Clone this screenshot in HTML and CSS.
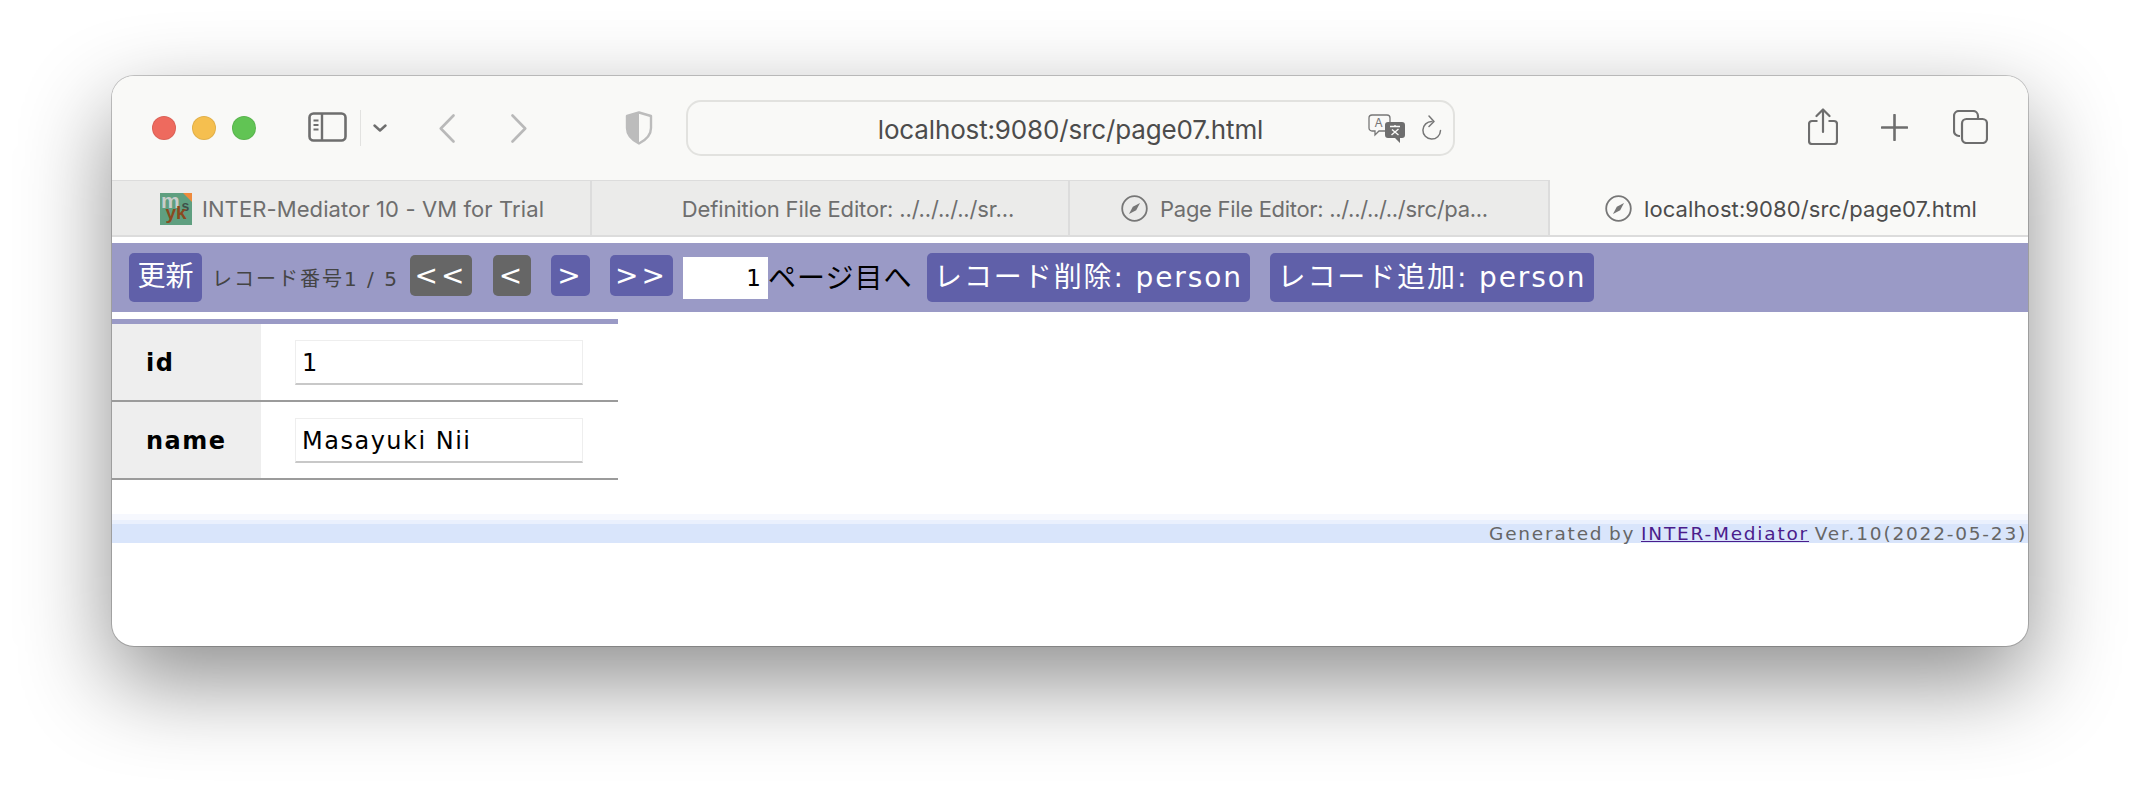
FILE: index.html
```html
<!DOCTYPE html>
<html lang="ja">
<head>
<meta charset="utf-8">
<title>INTER-Mediator</title>
<link rel="stylesheet" href="styles.css">
</head>
<body>
<div class="window">
  <header class="chrome">
    <span class="light red"></span><span class="light yellow"></span><span class="light green"></span>
    <svg class="ic sidebar" width="39" height="30" viewBox="0 0 39 30"><rect x="1.5" y="1.5" width="36" height="27" rx="4" fill="none" stroke="#6e6e6e" stroke-width="2.6"/><path d="M14 1.5v27" stroke="#6e6e6e" stroke-width="2.4"/><path d="M5.5 8.5h5M5.5 13h5M5.5 17.5h5" stroke="#6e6e6e" stroke-width="2"/></svg>
    <span class="divider"></span>
    <svg class="ic drop" width="14" height="8" viewBox="0 0 14 8"><path d="M1.5 1.5 7 6.5l5.500-5" fill="none" stroke="#6e6e6e" stroke-width="2.400" stroke-linecap="round" stroke-linejoin="round"/></svg>
    <svg class="ic back" width="16" height="29" viewBox="0 0 16 29"><path d="M14.500 1.500 1.800 14.500l12.700 13" fill="none" stroke="#b9b9b9" stroke-width="2.600" stroke-linecap="round" stroke-linejoin="round"/></svg>
    <svg class="ic fwd" width="16" height="29" viewBox="0 0 16 29"><path d="M1.500 1.500 14.200 14.500 1.500 27.500" fill="none" stroke="#b9b9b9" stroke-width="2.600" stroke-linecap="round" stroke-linejoin="round"/></svg>
    <svg class="ic shield" width="28" height="34" viewBox="0 0 28 34"><path d="M14 1.500 26 5v12c0 7-5 12-12 15.500C7 29 2 24 2 17V5z" fill="none" stroke="#bcbcbc" stroke-width="2.400" stroke-linejoin="round"/><path d="M14 1.500V32.500C7 29 2 24 2 17V5z" fill="#bcbcbc"/></svg>
    <div class="urlbar">
      <span></span>
      <span class="urltext">localhost:9080/src/page07.html</span>
      <span class="urlicons">
        <svg width="38" height="29" viewBox="0 0 38 29"><path d="M4 1h15a3 3 0 0 1 3 3v10a3 3 0 0 1-3 3h-8l-4 4v-4H4a3 3 0 0 1-3-3V4a3 3 0 0 1 3-3z" fill="#f9f9f7" stroke="#777" stroke-width="1.300"/><text class="glyph" x="6.500" y="13" font-size="12">A</text><path d="M20 8h14a3 3 0 0 1 3 3v10a3 3 0 0 1-3 3h-2v5l-5-5h-7a3 3 0 0 1-3-3V11a3 3 0 0 1 3-3z" fill="#6e6e6e"/><path d="M22 12.500h10M27 11v2M23.500 21l7-6M24 15.500l6.500 5.500" stroke="#f9f9f7" stroke-width="1.400" fill="none"/></svg>
        <svg class="reload" width="22" height="26" viewBox="0 0 22 26"><path d="M12 6.500a8.800 8.800 0 1 0 8.500 9" fill="none" stroke="#777" stroke-width="1.500" stroke-linecap="round"/><path d="M9 1l5 5.500-5 5" fill="none" stroke="#777" stroke-width="1.500" stroke-linecap="round" stroke-linejoin="round"/></svg>
      </span>
    </div>
    <svg class="ic share" width="30" height="37" viewBox="0 0 30 37"><path d="M9.500 13H4a3 3 0 0 0-3 3v17a3 3 0 0 0 3 3h22a3 3 0 0 0 3-3V16a3 3 0 0 0-3-3h-5.500" fill="none" stroke="#6e6e6e" stroke-width="2.200"/><path d="M15 24V2M8.500 8 15 1.500 21.500 8" fill="none" stroke="#6e6e6e" stroke-width="2.200" stroke-linecap="round" stroke-linejoin="round"/></svg>
    <svg class="ic plus" width="27" height="27" viewBox="0 0 27 27"><path d="M13.500 1v25M1 13.500h25" stroke="#6e6e6e" stroke-width="2.600" stroke-linecap="round"/></svg>
    <svg class="ic copies" width="35" height="34" viewBox="0 0 35 34"><path d="M7 26H6a5 5 0 0 1-5-5V6a5 5 0 0 1 5-5h14a5 5 0 0 1 5 5v2" fill="none" stroke="#6e6e6e" stroke-width="2.200"/><rect x="9" y="9" width="25" height="24" rx="4.500" fill="none" stroke="#6e6e6e" stroke-width="2.200"/></svg>
  </header>
  <nav class="tabs">
    <div class="tab t1">
      <svg class="favicon" width="32" height="32" viewBox="0 0 32 32"><rect width="32" height="32" fill="#5f9f80"/><path d="M23 0h9v9z" fill="#ee8a3c"/><text class="fav m" x="1" y="15" font-size="21">m</text><text class="fav s" x="21.500" y="18" font-size="14">s</text><text class="fav yk" x="5.500" y="26" font-size="19">yk</text></svg>
      <span>INTER-Mediator 10 - VM for Trial</span>
    </div>
    <div class="tab t2"><span>Definition File Editor: ../../../../sr...</span></div>
    <div class="tab t3">
      <svg class="compass" width="27" height="27" viewBox="0 0 27 27"><circle cx="13.500" cy="13.500" r="12.300" fill="none" stroke="#777" stroke-width="1.800"/><path d="M19 8l-7.200 3.800L8 19l7.200-3.800z" fill="#777"/></svg>
      <span>Page File Editor: ../../../../src/pa...</span>
    </div>
    <div class="tab t4 active">
      <svg class="compass" width="27" height="27" viewBox="0 0 27 27"><circle cx="13.500" cy="13.500" r="12.300" fill="none" stroke="#777" stroke-width="1.800"/><path d="M19 8l-7.200 3.800L8 19l7.200-3.800z" fill="#777"/></svg>
      <span>localhost:9080/src/page07.html</span>
    </div>
  </nav>
  <main class="page">
    <div class="navbar">
      <button class="btn reload-btn">更新</button>
      <span class="info">レコード番号1 / 5</span>
      <button class="btn small grey w62">&lt;&lt;</button>
      <button class="btn small grey w38">&lt;</button>
      <button class="btn small w39">&gt;</button>
      <button class="btn small w63">&gt;&gt;</button>
      <input class="pageno" value="1">
      <span class="pagelabel">ページ目へ</span>
      <button class="btn large del">レコード削除: person</button>
      <button class="btn large add">レコード追加: person</button>
    </div>
    <table class="record">
      <tr><th>id</th><td><input class="field" value="1"></td></tr>
      <tr><th>name</th><td><input class="field" value="Masayuki Nii"></td></tr>
    </table>
    <footer class="credit">Generated by <a href="#">INTER-Mediator</a> Ver.10(2022-05-23)</footer>
  </main>
</div>
</body>
</html>
```
FILE: styles.css
```css
* { box-sizing: border-box; }
html, body { margin: 0; height: 794px; overflow: hidden; background: #fff; }
body { padding: 76px 112px 0; }
.window {
  width: 1916px;
  height: 570px;
  border-radius: 22px;
  overflow: hidden;
  background: #fff;
  box-shadow: 0 0 0 1px rgba(0,0,0,.2), 0 35px 90px rgba(0,0,0,.45);
  font-family: "Inter", "Noto Sans", sans-serif;
}
.chrome {
  height: 104px;
  background: #f9f9f7;
  display: flex;
  align-items: center;
  padding-left: 40px;
}
.light { width: 24px; height: 24px; border-radius: 50%; margin-right: 16px; border: 1px solid rgba(0,0,0,.08); flex: none; }
.red { background: #ee6a5e; }
.yellow { background: #f5bf4f; }
.green { background: #61c454; }
.ic { flex: none; display: block; }
.sidebar { margin-left: 36px; margin-bottom: 2px; }
.divider { width: 1px; height: 36px; background: #e2e2e0; margin-left: 13px; }
.drop { margin-left: 12px; }
.back { margin-left: 52px; }
.fwd { margin-left: 56px; }
.shield { margin-left: 98px; }
.urlbar {
  margin-left: 33px;
  width: 769px;
  height: 56px;
  border: 2px solid #e2e2df;
  border-radius: 15px;
  display: grid;
  grid-template-columns: 1fr auto 1fr;
  align-items: center;
}
.urltext { font-size: 26px; color: #4c4c4c; letter-spacing: -.15px; padding-top: 3px; }
.urlicons { display: flex; justify-content: flex-end; align-items: center; padding-right: 11px; gap: 14px; }
.glyph { font-family: "Inter", sans-serif; fill: #777; }
.share { margin-left: 353px; margin-bottom: 4px; }
.plus { margin-left: 43px; margin-bottom: 2px; }
.copies { margin-left: 45px; margin-bottom: 2px; }
.tabs { display: flex; height: 57px; background: #f9f9f7; }
.tab {
  background: #ebebea;
  display: flex;
  align-items: center;
  justify-content: center;
  font-size: 22px;
  color: #6e6e6e;
  border-top: 1px solid #dcdcdc;
  border-right: 2px solid #dcdcdc;
  border-bottom: 2px solid #dcdcdc;
  white-space: nowrap;
  padding-top: 1px;
}
.t1 { width: 480px; gap: 10px; letter-spacing: .1px; padding-left: 2px; }
.t2 { width: 478px; padding-left: 36px; letter-spacing: -.15px; }
.t3 { width: 480px; gap: 12px; letter-spacing: -.3px; padding-right: 9px; }
.t4 { width: 478px; gap: 12px; border-right: 0; letter-spacing: .1px; padding-left: 4px; }
.tab.active { background: #f9f9f7; color: #4c4c4c; border-top: 0; padding-top: 2px; }
.favicon { flex: none; }
.fav { font-family: "Liberation Sans", sans-serif; font-weight: 700; letter-spacing: 0; }
.fav.m { fill: #c9cdca; }
.fav.s { fill: #3f4f4a; }
.fav.yk { fill: #8a4a1e; }
.page { font-family: "DejaVu Sans", "Noto Sans CJK JP", sans-serif; padding-top: 6px; }
.navbar {
  height: 69px;
  background: #9a9ac6;
  display: flex;
  align-items: center;
  padding-left: 17px;
}
.btn {
  border: 0;
  color: #fff;
  background: #6060a9;
  font: inherit;
  padding: 0;
  border-radius: 5px;
  flex: none;
}
.reload-btn { width: 73px; height: 49px; font-size: 28px; padding-bottom: 7px; }
.info { font-size: 20px; color: #444; margin-left: 10px; width: 198px; white-space: nowrap; letter-spacing: 2px; }
.small { height: 41px; font-size: 28px; letter-spacing: 3px; margin-bottom: 4px; padding-bottom: 1px; }
.grey { background: #666; }
.w62 { width: 62px; }
.w38 { width: 38px; margin-left: 21px; }
.w39 { width: 39px; margin-left: 20px; }
.w63 { width: 63px; margin-left: 20px; }
.pageno {
  width: 85px;
  height: 42px;
  margin-left: 10px;
  border: 0;
  background: #fff;
  text-align: right;
  font: 23px "DejaVu Sans", sans-serif;
  padding: 0 7px 0 0;
  color: #000;
}
.pagelabel { font-size: 28px; color: #000; width: 159px; white-space: nowrap; letter-spacing: 1px; padding-bottom: 3px; }
.large { height: 49px; font-size: 28px; width: 323px; letter-spacing: 1.9px; white-space: nowrap; padding-bottom: 5px; }
.add { margin-left: 20px; width: 324px; }
.record {
  width: 506px;
  margin-top: 7px;
  border-collapse: separate;
  border-spacing: 0;
  border-top: 5px solid #9a9ac6;
}
.record th, .record td { height: 78px; border-bottom: 2px solid #9b9b9b; }
.record th {
  width: 149px;
  background: #eee;
  text-align: left;
  padding: 2px 0 0 34px;
  font-size: 24px;
  letter-spacing: 1.500px;
  color: #000;
}
.record td { padding: 0 0 0 34px; }
.field {
  display: block;
  width: 288px;
  height: 45px;
  border: 1px solid #eee;
  border-bottom: 2px solid #c8c8c8;
  background: #fff;
  font: 24px "DejaVu Sans", sans-serif;
  letter-spacing: 1.500px;
  padding: 3px 0 0 6px;
  color: #000;
}
.credit {
  margin-top: 34px;
  height: 29px;
  background: linear-gradient(#f6f8fe 0 6px, #eaf0fd 6px 10px, #d9e5fb 10px);
  text-align: right;
  font-size: 18.500px;
  line-height: 40px;
  letter-spacing: 1.800px;
  word-spacing: -2px;
  color: #666;
  white-space: nowrap;
  padding-right: 1px;
}
.credit a { color: #4b1d8c; }
```
